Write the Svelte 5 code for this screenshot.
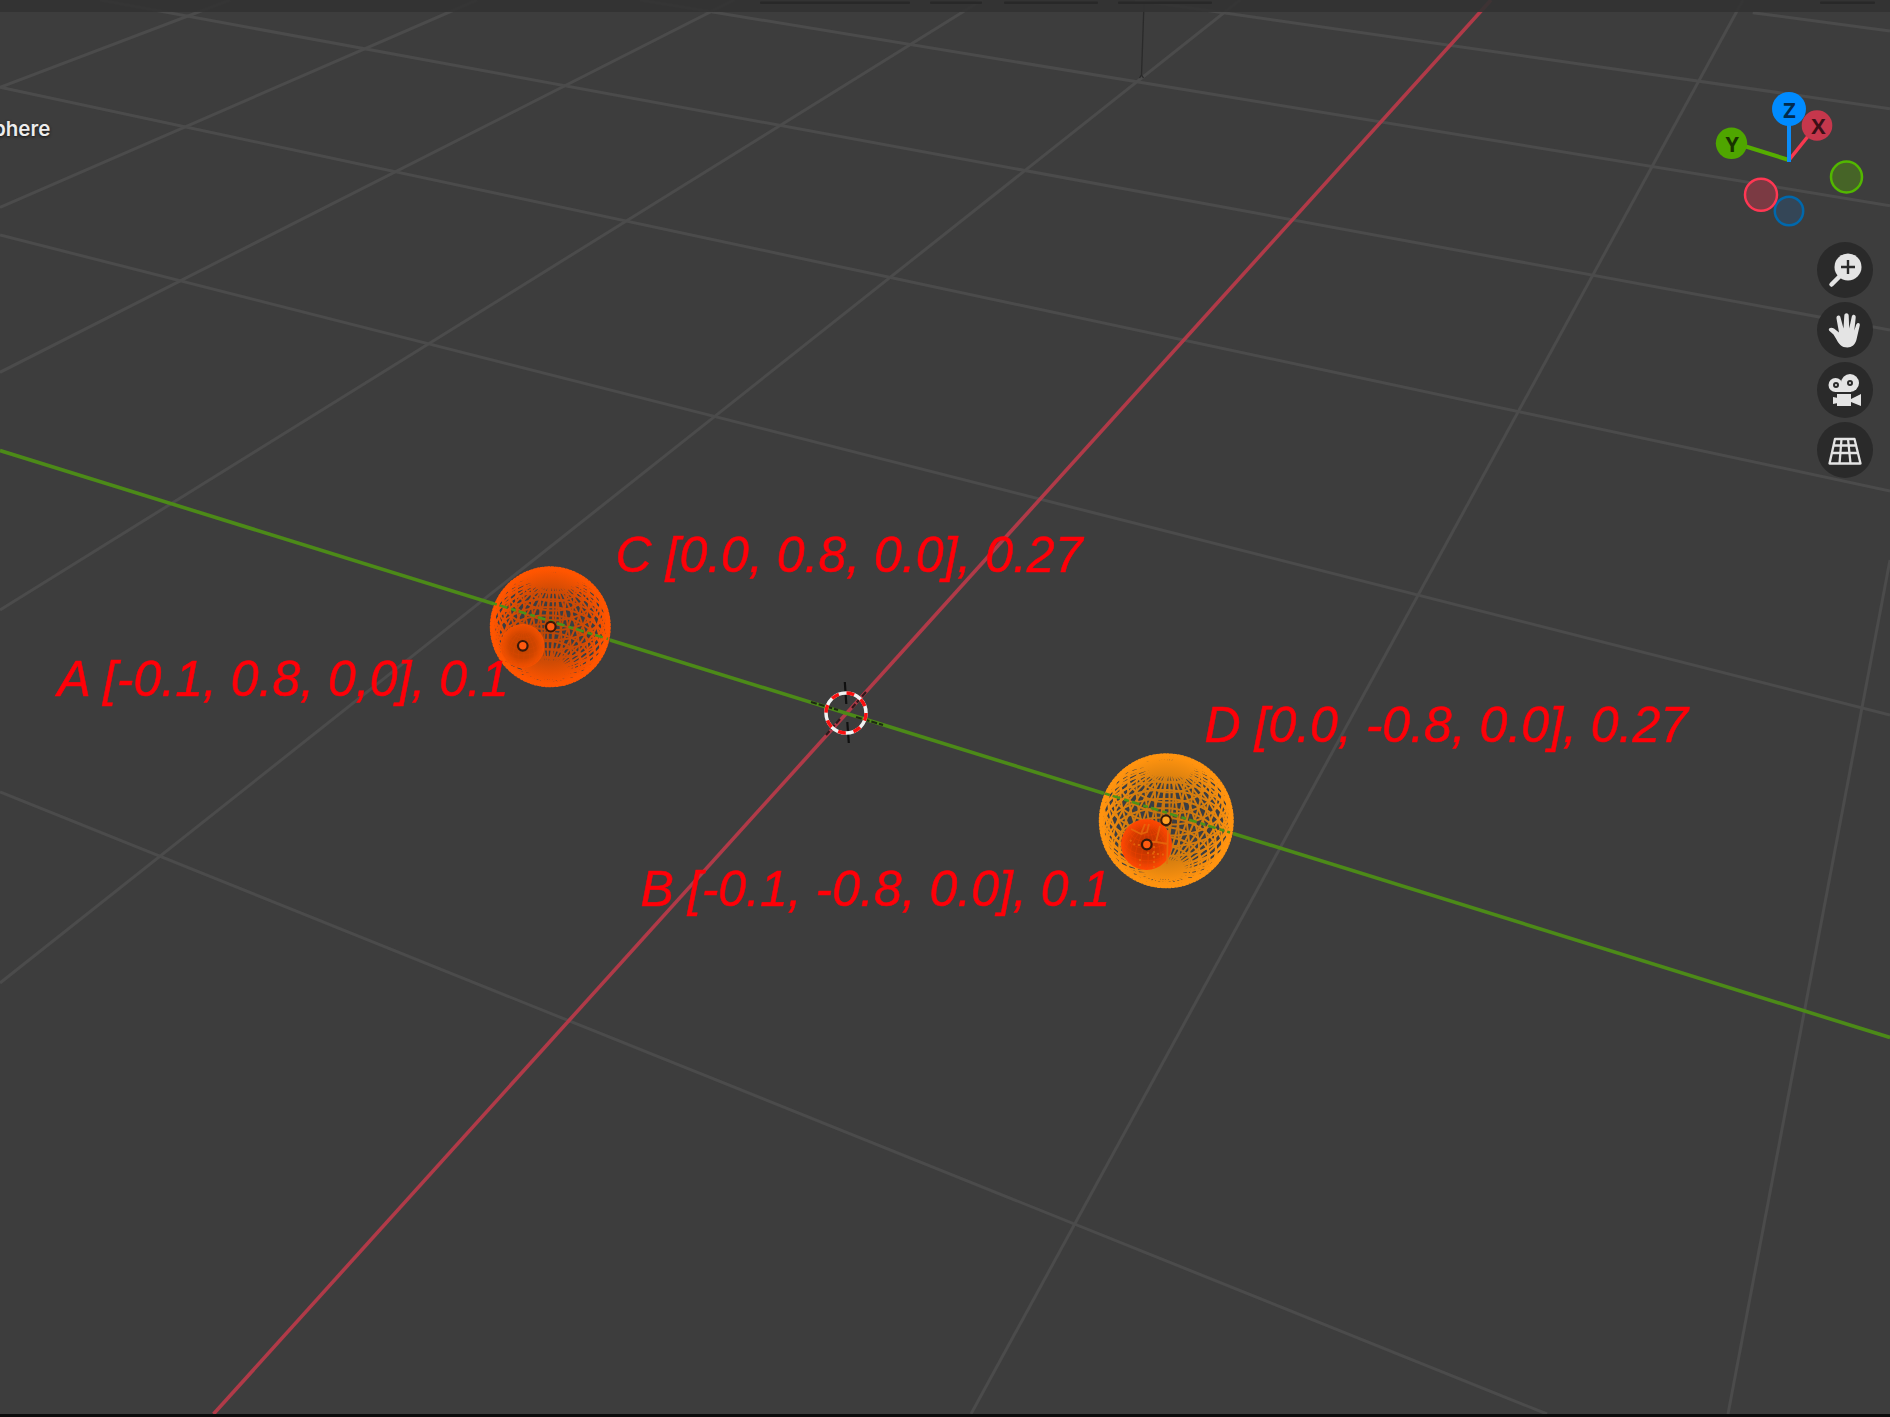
<script>
  const gridLines = [
    [1752.7, 12.7, 1890, 31], [1135, 0, 1890, 108.7], [640, 0, 1890, 205.7],
    [100, 0, 1890, 330], [0, 87.3, 1890, 491], [0, 235, 1890, 715], [0, 792, 1547, 1414],
    [971, 1414, 1743, 0], [1728, 1414, 1890, 560], [0, 983, 1240, 0],
    [0, 610, 982, 0], [0, 372.3, 734, 0], [0, 207.3, 477, 0], [0, 87.3, 230, 0]
  ];

  // Projects a latitude/longitude wireframe seen from above.
  function wire(cx, cy, r, seg, rings, front, elev = 0.68, roll = 0.05) {
    const se = Math.sin(elev), ce = Math.cos(elev);
    const cr = Math.cos(roll), sr = Math.sin(roll);
    const pt = (lat, lon) => {
      const x = Math.cos(lat) * Math.sin(lon);
      const d = Math.cos(lat) * Math.cos(lon);
      const z = Math.sin(lat);
      const sy = -(z * ce - d * se);
      const depth = d * ce + z * se;
      const k = 1 + depth * 0.07;
      const px = x * k, py = sy * k;
      return { x: cx + r * (px * cr - py * sr), y: cy + r * (px * sr + py * cr), depth };
    };
    let d = '';
    const edge = (a, b) => {
      if ((a.depth + b.depth > 0) === front) {
        d += `M${a.x.toFixed(1)} ${a.y.toFixed(1)}L${b.x.toFixed(1)} ${b.y.toFixed(1)}`;
      }
    };
    for (let i = 0; i < rings; i++) {
      const lat = -Math.PI / 2 + (Math.PI * i) / rings;
      const next = lat + Math.PI / rings;
      for (let j = 0; j < seg; j++) {
        const lon = (2 * Math.PI * (j + 0.35)) / seg;
        edge(pt(lat, lon), pt(next, lon));
        if (i) edge(pt(lat, lon), pt(lat, lon + (2 * Math.PI) / seg));
      }
    }
    return d;
  }

  const spheres = [
    { id: 'c', cx: 550.3, cy: 626.8, r: 59, seg: 40, rings: 20 },
    { id: 'd', cx: 1166.3, cy: 820.8, r: 66, seg: 40, rings: 20 }
  ].map((s) => ({
    ...s,
    back: wire(s.cx, s.cy, s.r, s.seg, s.rings, false),
    front: wire(s.cx, s.cy, s.r, s.seg, s.rings, true)
  }));

  const innerD = wire(1146.5, 844.5, 24.5, 24, 12, true);
  const innerC = wire(522.5, 646, 21, 24, 12, true);

  const labels = [
    { x: 57.5, y: 696, text: 'A [-0.1, 0.8, 0,0], 0.1' },
    { x: 640.5, y: 906, text: 'B [-0.1, -0.8, 0.0], 0.1' },
    { x: 615.5, y: 572, text: 'C [0.0, 0.8, 0.0], 0.27' },
    { x: 1204.5, y: 742, text: 'D [0.0, -0.8, 0.0], 0.27' }
  ];
  const tabs = [[760, 150], [930, 52], [1004, 94], [1118, 94], [1820, 55]];
</script>

<main class="viewport">
  <svg class="scene" viewBox="0 0 1890 1417" width="1890" height="1417">
    <defs>
      <radialGradient id="grad-c" gradientUnits="userSpaceOnUse" cx="550" cy="626.5" r="60">
        <stop offset="0" stop-color="#b84708" /><stop offset="0.6" stop-color="#cf4b05" /><stop offset="0.95" stop-color="#ff5500" />
      </radialGradient>
      <radialGradient id="grad-d" gradientUnits="userSpaceOnUse" cx="1166" cy="820.5" r="67">
        <stop offset="0" stop-color="#c0700f" /><stop offset="0.6" stop-color="#d67e0f" /><stop offset="0.95" stop-color="#ff930f" />
      </radialGradient>
      <radialGradient id="small-c">
        <stop offset="0" stop-color="#b94100" /><stop offset="0.6" stop-color="#d04600" /><stop offset="1" stop-color="#f85300" />
      </radialGradient>
      <radialGradient id="small-d">
        <stop offset="0" stop-color="#b53200" /><stop offset="0.6" stop-color="#d43b00" /><stop offset="1" stop-color="#ff4a05" />
      </radialGradient>
    </defs>

    <g class="grid">
      {#each gridLines as [x1, y1, x2, y2]}<line {x1} {y1} {x2} {y2} />{/each}
    </g>
    <path class="camera-line" d="M1144 3L1141.5 75m-2 3l2-3l2 3" />
    <line class="axis-x" x1="213.5" y1="1414" x2="1491" y2="0" />
    <line class="axis-y" x1="0" y1="450.5" x2="1890" y2="1037.5" />

    {#each spheres as s}
      <g class="mesh {s.id}">
        <circle class="hollow" cx={s.cx} cy={s.cy} r={s.r + 2} />
        <path class="back" d={s.back} />
        <path d={s.front} />
        <circle class="rim" cx={s.cx} cy={s.cy} r={s.r - 1} />
      </g>
    {/each}
    <line class="axis-through" x1="492" y1="603" x2="608" y2="639" />
    <line class="axis-through" x1="1105" y1="793.5" x2="1230" y2="832.5" />
    <circle cx="522.5" cy="646" r="22" fill="url(#small-c)" />
    <path class="inner-c" d={innerC} />
    <circle cx="1146.5" cy="844.5" r="25.5" fill="url(#small-d)" />
    <path class="inner-d" d={innerD} />
    <path class="overlap" d="M1131 829l10 5l4-10m-4 10l6-2l2-8m11 2l-4 16l12 2m-12-2h-8m20-12l-1 34" />
    <path class="overlap dots" d="M1130 840l5 5h7m-2 14v7m7-13l20 2m-13-9v23" />

    <g class="origin">
      <circle class="hot" cx="550.8" cy="626.7" r="4.8" />
      <circle class="hot" cx="522.8" cy="645.8" r="4.8" />
      <circle class="warm" cx="1166" cy="820.3" r="4.8" />
      <circle class="hot" cx="1146.8" cy="844.5" r="4.8" />
    </g>

    <g class="cursor">
      <path d="M844.8 682L846.3 704M847.3 722L848.8 743" />
      <path class="dashed" d="M811 702L838 710M856 717L883 725M866 692L852 708M840 719L826 735" />
      <circle class="white" cx="846" cy="713" r="20" />
      <circle class="red" cx="846" cy="713" r="20" />
    </g>

    <g class="labels">
      {#each labels as l}<text x={l.x} y={l.y}>{l.text}</text>{/each}
    </g>
  </svg>

  <header class="header">
    <svg width="1890" height="12">
      {#each tabs as [x, w]}<rect {x} y="1.5" width={w} height="2.5" rx="1" />{/each}
    </svg>
  </header>

  <div class="overlay">
    <span class="object-name">phere</span>
    <aside class="controls">
      <svg class="gizmo" viewBox="0 0 170 160" width="170" height="160">
        <path d="M79 80L31 65" stroke="#55ad00" stroke-width="4" />
        <path d="M79 80L107 45" stroke="#f8384f" stroke-width="3.600" />
        <circle cx="107" cy="45.5" r="15.3" fill="#c6374c" />
        <path d="M79 82V28" stroke="#0b8cf8" stroke-width="4" />
        <circle cx="79" cy="29" r="17" fill="#008bff" />
        <circle cx="21.5" cy="63.3" r="15.7" fill="#4fa600" />
        <circle cx="136.5" cy="97" r="15.5" fill="#466427" stroke="#52b700" stroke-width="2.5" />
        <circle cx="79" cy="131" r="14.2" fill="#344657" stroke="#0068ac" stroke-width="2.5" />
        <circle cx="51" cy="114.7" r="16" fill="#7b3a43" stroke="#ff3753" stroke-width="2.5" />
        <g class="axis-names">
          <text x="79.5" y="37.500" fill="#022b4d">Z</text>
          <text x="108.3" y="54" fill="#3b1017">X</text>
          <text x="22.3" y="72" fill="#183200">Y</text>
        </g>
      </svg>
      <div class="tools">
        <button class="tool" aria-label="Zoom">
          <svg viewBox="0 0 56 56"><path class="handle" d="M24 33L14.5 42.5" /><circle cx="31" cy="25" r="13.5" /><path class="cut" d="M31 18v14M24 25h14" /></svg>
        </button>
        <button class="tool" aria-label="Pan">
          <svg viewBox="0 -1 56 56"><g transform="translate(0 -2.5)"><path d="M12 30c-1-2.500 2-3.500 5-2l5 4l-2.500-14c-.5-3.500 3.500-4 4-1l3 11l.8-13c.2-3 4.200-3 4.400 0l.5 13l2.600-12c.7-2.700 4.200-2 3.900 1l-1.400 13l2-6c1-2.600 4-1.800 3.500.7l-3.300 14.300c-1 5-5 8-9 8c-6 0-8.500-3.500-11-8l-3-5z" /></g></svg>
        </button>
        <button class="tool" aria-label="Camera">
          <svg viewBox="0 0 56 56"><circle cx="18.500" cy="23" r="7" /><circle cx="33" cy="21" r="9" /><path d="M18 22h16v8H18zM20 32h14v12H20zM34 37l10-5v12l-10-4zM16 35l5 1v5l-5 1z" /><circle class="cut thin" cx="19" cy="23" r="2" /><circle class="cut thin" cx="33" cy="21" r="2" /></svg>
        </button>
        <button class="tool" aria-label="Perspective">
          <svg viewBox="0 0 56 56"><path class="mesh-icon" d="M18 17h19.500l6 24.500H12.500zM16.800 23.500h22.500M15 31h26M24.500 17l-2 24.500M31 17l2.500 24.500" /></svg>
        </button>
      </div>
    </aside>
  </div>
  <footer class="footer"></footer>
</main>

<style>
  :global(body) { margin: 0; overflow: hidden; }
  .viewport {
    position: relative; box-sizing: border-box; width: 1890px; height: 1417px; overflow: hidden;
    display: flex; flex-direction: column; background: #3d3d3d; color: #ececec;
  }
  svg { display: block; }
  .scene { position: absolute; inset: 0; fill: none; }
  .grid { stroke: #4b4b4b; stroke-width: 3; }
  .camera-line { stroke: #2a2a2a; stroke-width: 1.3; }
  .axis-x { stroke: #b03a48; stroke-width: 3.6; }
  .axis-y { stroke: #4c8a18; stroke-width: 3.6; }
  .mesh { stroke-width: 2; }
  .mesh.c { stroke: url(#grad-c); }
  .mesh.d { stroke: url(#grad-d); }
  .hollow { fill: #3b3e43; stroke: none; }
  .rim { stroke-width: 5; stroke-dasharray: 3 .6; }
  .axis-through { stroke: #4c9218; stroke-width: 2.6; stroke-dasharray: 5 3 8 4; }
  .inner-c { stroke: #e64d00; stroke-width: 1; opacity: .25; }
  .inner-d { stroke: #ff4600; stroke-width: 1; opacity: .3; }
  .overlap { stroke: #e66b0b; stroke-width: 1.8; opacity: .8; }
  .dots { stroke-dasharray: 2 3; }
  .origin { stroke: #36180a; stroke-width: 2.2; }
  .hot { fill: #ff5a10; }
  .warm { fill: #ffa024; }
  .cursor { stroke: #101010; stroke-width: 2.2; }
  .dashed { stroke-dasharray: 6 2; opacity: .8; }
  .white { stroke: #f1f1f1; stroke-width: 3.5; }
  .red { stroke: #fa1010; stroke-width: 3.5; stroke-dasharray: 7.85; }
  .labels { fill: #ff0008; stroke: #ff0008; stroke-width: .5; font: italic 50px "Liberation Sans", Arial, sans-serif; }
  .header { position: relative; height: 12px; background: #333333e8; }
  .header rect { fill: #282828; }
  .overlay { position: relative; flex: 1; display: flex; justify-content: space-between; align-items: flex-start; }
  .object-name {
    margin: 101.5px 0 0 -7px; font: 600 20.5px/30px Inter, "Noto Sans", sans-serif;
    text-shadow: 0 1px 3px #111;
  }
  .controls { display: flex; flex-direction: column; align-items: flex-end; padding: 68px 17px 0 0; }
  .gizmo { margin-right: -7px; fill: none; }
  .axis-names { font: 700 21.5px "Open Sans", sans-serif; text-anchor: middle; }
  .tools { display: flex; flex-direction: column; gap: 4px; margin-top: 2px; }
  .tool { width: 56px; height: 56px; padding: 0; border: 0; border-radius: 50%; background: #2a2a2a; }
  .tool svg { width: 56px; height: 56px; fill: #e4e4e4; }
  .handle { stroke: #e4e4e4; stroke-width: 4.5; stroke-linecap: round; }
  .cut { fill: none; stroke: #2a2a2a; stroke-width: 2.4; }
  .thin { stroke-width: 2; }
  .mesh-icon { fill: none; stroke: #e4e4e4; stroke-width: 2.3; stroke-linejoin: round; }
  .footer { position: relative; height: 3px; background: #0b0b0b; }
</style>
